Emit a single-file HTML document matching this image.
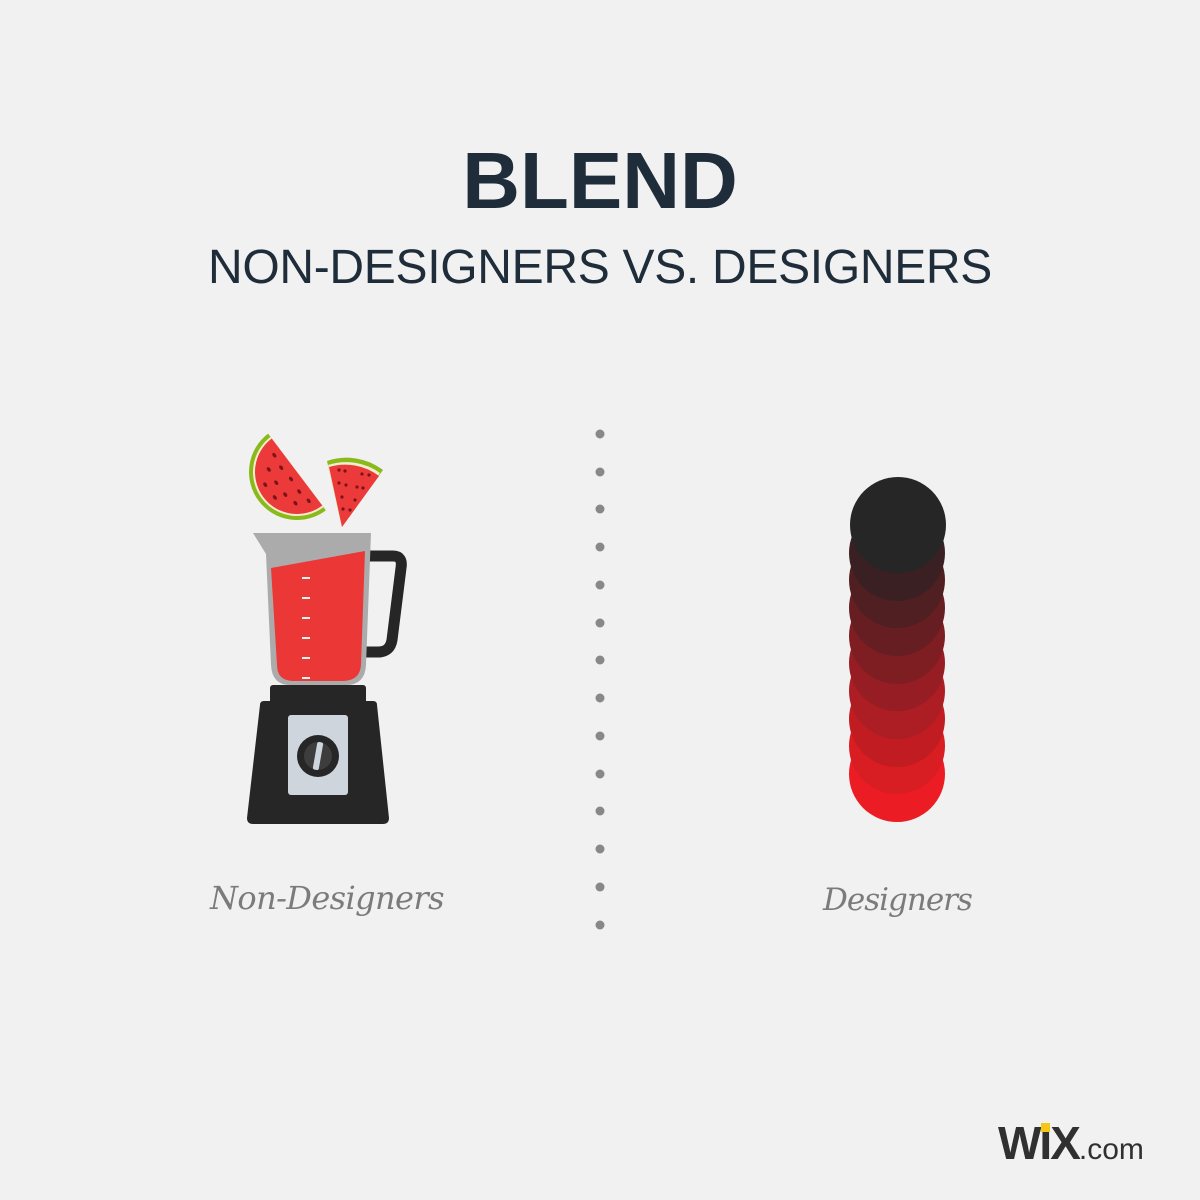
<!DOCTYPE html>
<html><head><meta charset="utf-8"><style>
html,body{margin:0;padding:0;background:#f1f1f1;width:1200px;height:1200px;overflow:hidden}
body{position:relative;font-family:"Liberation Sans",sans-serif}
.t{position:absolute;left:0;width:1200px;text-align:center;color:#1f2d3a}
</style></head><body>
<div class="t" style="top:135px;font-size:80px;font-weight:bold;letter-spacing:0px">BLEND</div>
<div class="t" style="top:240px;font-size:48px;letter-spacing:-0.3px">NON-DESIGNERS VS. DESIGNERS</div>
<svg width="1200" height="1200" style="position:absolute;left:0;top:0">
<g fill="#888">
<circle cx="600" cy="434" r="4.5"/><circle cx="600" cy="472" r="4.5"/><circle cx="600" cy="509" r="4.5"/><circle cx="600" cy="547" r="4.5"/><circle cx="600" cy="585" r="4.5"/><circle cx="600" cy="623" r="4.5"/><circle cx="600" cy="660" r="4.5"/><circle cx="600" cy="698" r="4.5"/><circle cx="600" cy="736" r="4.5"/><circle cx="600" cy="774" r="4.5"/><circle cx="600" cy="811" r="4.5"/><circle cx="600" cy="849" r="4.5"/><circle cx="600" cy="887" r="4.5"/><circle cx="600" cy="925" r="4.5"/>
</g>
<circle cx="897" cy="774" r="48" fill="#ec1c24"/>
<circle cx="897" cy="746" r="48" fill="#d81d23"/>
<circle cx="897" cy="719" r="48" fill="#c21c23"/>
<circle cx="897" cy="691" r="48" fill="#ac1d24"/>
<circle cx="897" cy="663" r="48" fill="#951d23"/>
<circle cx="897" cy="636" r="48" fill="#7e1e23"/>
<circle cx="897" cy="608" r="48" fill="#661e22"/>
<circle cx="897" cy="580" r="48" fill="#4f1f21"/>
<circle cx="897" cy="553" r="48" fill="#3a2022"/>
<circle cx="898" cy="525" r="48" fill="#262626"/>
<g transform="translate(297,472) rotate(53)">
<path d="M-48 0 A48 48 0 0 0 48 0 Z" fill="#8ab91c"/>
<path d="M-44 0 A44 44 0 0 0 44 0 Z" fill="#f2eecc"/>
<path d="M-42 0 A42 42 0 0 0 42 0 Z" fill="#ec3a3a"/>
<g fill="#7a1418"><ellipse cx="-27" cy="8" rx="2.6" ry="1.7"/><ellipse cx="-13" cy="10" rx="2.6" ry="1.7"/><ellipse cx="2" cy="9" rx="2.6" ry="1.7"/><ellipse cx="17" cy="10" rx="2.6" ry="1.7"/><ellipse cx="30" cy="8" rx="2.6" ry="1.7"/><ellipse cx="-19" cy="21" rx="2.6" ry="1.7"/><ellipse cx="-4" cy="23" rx="2.6" ry="1.7"/><ellipse cx="11" cy="23" rx="2.6" ry="1.7"/><ellipse cx="24" cy="20" rx="2.6" ry="1.7"/><ellipse cx="-9" cy="33" rx="2.6" ry="1.7"/><ellipse cx="7" cy="33" rx="2.6" ry="1.7"/></g>
</g>
<path d="M342 527 L327 461 A60 60 0 0 1 383 470 Z" fill="#8ab91c"/>
<path d="M342 527 L328 465 A58 58 0 0 1 380 473 Z" fill="#f2eecc"/>
<path d="M342 527 L329 467 A56 56 0 0 1 379 476 Z" fill="#ec3a3a"/>
<g fill="#7a1418"><circle cx="339" cy="470" r="1.6"/><circle cx="345" cy="471" r="1.6"/><circle cx="362" cy="474" r="1.6"/><circle cx="369" cy="475" r="1.6"/><circle cx="339" cy="483" r="1.6"/><circle cx="346" cy="485" r="1.6"/><circle cx="357" cy="487" r="1.6"/><circle cx="363" cy="488" r="1.6"/><circle cx="342" cy="497" r="1.6"/><circle cx="355" cy="500" r="1.6"/><circle cx="343" cy="509" r="1.6"/><circle cx="350" cy="510" r="1.6"/></g>
<path d="M368 556 H393 Q403 556 401 568 L392 640 Q390 652 378 652 H366" fill="none" stroke="#262626" stroke-width="11"/>
<path d="M253 533 H371 L366 665 Q365 685 346 685 H290 Q272 685 271 665 L266 554 Z" fill="#ababab"/>
<path d="M271 568 L365 551 L361 665 Q360 680 344 681 H292 Q277 680 277 665 Z" fill="#ec3737"/>
<g fill="#f4f4f4"><rect x="302" y="577" width="8" height="2"/><rect x="302" y="597" width="8" height="2"/><rect x="302" y="617" width="8" height="2"/><rect x="302" y="637" width="8" height="2"/><rect x="302" y="657" width="8" height="2"/><rect x="302" y="677" width="8" height="2"/></g>
<rect x="270" y="685" width="96" height="20" rx="3" fill="#262626"/>
<path d="M264 701 H373 Q377 701 377 705 L389 818 Q389 824 383 824 H253 Q247 824 247 818 L260 705 Q260 701 264 701 Z" fill="#262626"/>
<rect x="288" y="715" width="60" height="80" rx="3" fill="#cfd5dd"/>
<circle cx="318" cy="756" r="21" fill="#262626"/>
<circle cx="318" cy="756" r="14" fill="#3d3d3d"/>
<rect x="315" y="742" width="6" height="28" rx="2" fill="#cfd5dd" transform="rotate(10 318 756)"/>
</svg>
<div style="position:absolute;left:210px;top:879px;font-family:'DejaVu Serif',serif;font-style:italic;font-size:32px;letter-spacing:-0.6px;color:#7b7b7b">Non-Designers</div>
<div style="position:absolute;left:823px;top:882px;font-family:'DejaVu Serif',serif;font-style:italic;font-size:31px;letter-spacing:-1px;color:#7b7b7b">Designers</div>
<div style="position:absolute;left:998px;top:1116px;font-size:46px;font-weight:bold;color:#303030;letter-spacing:-2px">W<span style="position:relative">I<span style="position:absolute;left:2px;top:6px;width:9px;height:9px;background:#f5c518"></span></span>X<span style="font-weight:normal;font-size:30px;letter-spacing:0">.com</span></div>
</body></html>
